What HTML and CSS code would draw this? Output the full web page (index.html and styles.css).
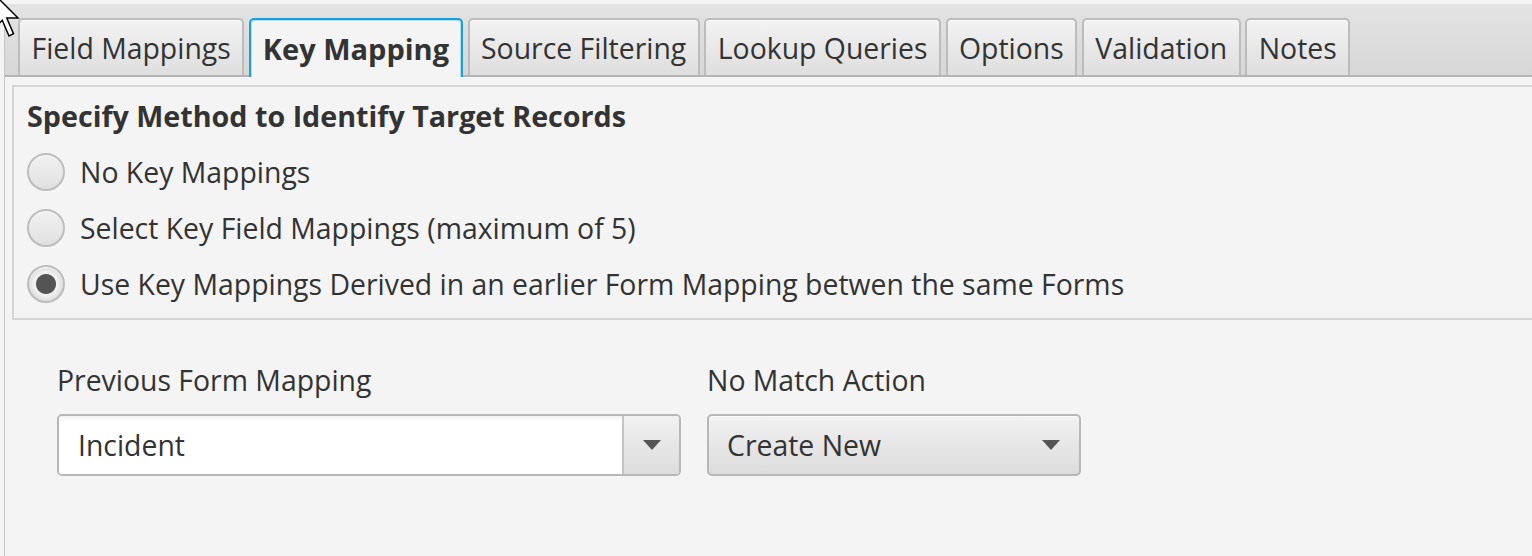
FILE: index.html
```html
<!DOCTYPE html>
<html lang="en">
<head>
  <meta charset="UTF-8" />
  <title>Form Mapping | Key Mapping</title>
  <link rel="stylesheet" href="styles.css">
</head>
<body>

  <div class="window">
    <nav class="tab-header">
      <div class="tab">Field Mappings</div>
      <div class="tab active">Key Mapping</div>
      <div class="tab">Source Filtering</div>
      <div class="tab">Lookup Queries</div>
      <div class="tab">Options</div>
      <div class="tab">Validation</div>
      <div class="tab">Notes</div>
    </nav>

    <main class="tab-content">
      <section class="method-box">
        <h2>Specify Method to Identify Target Records</h2>
        <label class="radio-row">
          <span class="radio"></span>
          No Key Mappings
        </label>
        <label class="radio-row">
          <span class="radio"></span>
          Select Key Field Mappings (maximum of 5)
        </label>
        <label class="radio-row">
          <span class="radio checked"></span>
          Use Key Mappings Derived in an earlier Form Mapping betwen the same Forms
        </label>
      </section>

      <div class="fields">
        <div class="field field-wide">
          <div class="field-label">Previous Form Mapping</div>
          <div class="combo editable">
            <span class="combo-value">Incident</span>
            <span class="combo-btn"><span class="arrow"></span></span>
          </div>
        </div>
        <div class="field field-narrow">
          <div class="field-label">No Match Action</div>
          <div class="combo">
            <span class="combo-value">Create New</span>
            <span class="arrow"></span>
          </div>
        </div>
      </div>
    </main>
  </div>

  <!-- mouse pointer left in the corner of the capture -->
  <svg class="cursor" width="30" height="42" viewBox="0 0 30 42">
    <polygon points="0,0 0,36 9,27 15.75,42.75 20.25,40.5 13.5,24.75 24.75,24.75"
             fill="#fff" stroke="#000" stroke-width="1.5" transform="translate(-6.75,-6.75)" />
  </svg>

</body>
</html>
```

FILE: styles.css
```css
* {
  box-sizing: border-box;
}

body {
  margin: 0;
  height: 556px;
  overflow: hidden;
  background-color: #f4f4f4;
  color: #333;
  font-family: "Open Sans", "Noto Sans", sans-serif;
  font-size: 28.4px;
}

.window {
  margin: 4px 0 0 4px;
  height: 552px;
  border-left: 1px solid #c6c6c6;
  background-color: #f4f4f4;
}

/* tab strip */
.tab-header {
  display: flex;
  align-items: flex-end;
  gap: 4.5px;
  height: 73px;
  padding-left: 13px;
  background: linear-gradient(#e3e3e3, #d7d7d7);
  border-bottom: 2px solid #b5b5b5;
}

.tab {
  display: flex;
  align-items: center;
  height: 57px;
  padding: 0 11.5px;
  white-space: nowrap;
  border: 2px solid #bcbcbc;
  border-bottom: none;
  border-radius: 5px 5px 0 0;
  background: linear-gradient(#f3f3f3, #dedede);
  box-shadow: inset 0 1px 0 #fbfbfb;
}

.tab.active {
  height: 59px;
  margin-bottom: -2px;
  padding: 0 12px;
  font-size: 29px;
  font-weight: bold;
  border-color: #1a9fd8;
  background: #f4f4f4;
  box-shadow: inset 1px 1px 0 #b5def0, inset -1px 0 0 #b5def0;
}

/* content */
.tab-content {
  padding: 8px 0 0 7px;
}

.method-box {
  border: 2px solid #d5d5d5;
  border-right: none;
  padding: 9px 0 6px 13px;
}

.method-box h2 {
  margin: 0 0 8px 0;
  font-size: 28.7px;
  line-height: 40px;
  font-weight: bold;
}

.radio-row {
  display: flex;
  align-items: center;
  gap: 15px;
  height: 56px;
  line-height: 40px;
}

.radio {
  flex: none;
  width: 38px;
  height: 38px;
  border-radius: 50%;
  border: 2px solid #bdbdbd;
  background: linear-gradient(#f1f1f1, #e0e0e0);
  box-shadow: inset 0 1px 0 #fafafa;
}

.radio.checked {
  background: radial-gradient(circle, #545454 0, #545454 9.5px, #f3f3f3 10.5px, #ececec 13px, #dcdcdc 17px);
}

.fields {
  display: flex;
  gap: 26px;
  margin-top: 40px;
  padding-left: 45px;
}

.field-wide {
  width: 624px;
}

.field-narrow {
  width: 374px;
}

.field-label {
  line-height: 40px;
  margin-bottom: 14px;
}

.combo {
  display: flex;
  align-items: center;
  height: 62px;
  border: 2px solid #b7b7b7;
  border-radius: 5px;
  background: linear-gradient(#f1f1f1, #dcdcdc);
  box-shadow: inset 0 1px 0 #fbfbfb;
  padding-left: 18px;
  padding-right: 19px;
}

.combo-value {
  flex: 1;
}

.combo.editable {
  padding: 0;
  overflow: hidden;
  background: #fff;
}

.combo.editable .combo-value {
  padding-left: 19px;
  align-self: stretch;
  display: flex;
  align-items: center;
  background: linear-gradient(#f2f2f2, #fff 6px);
}

.combo-btn {
  display: flex;
  align-items: center;
  justify-content: center;
  width: 57px;
  height: 100%;
  border-left: 2px solid #c4c4c4;
  background: linear-gradient(#f1f1f1, #dcdcdc);
}

.arrow {
  width: 0;
  height: 0;
  border-left: 9.5px solid transparent;
  border-right: 9.5px solid transparent;
  border-top: 10px solid #555;
}

.cursor {
  position: absolute;
  left: 0;
  top: 0;
}
```
